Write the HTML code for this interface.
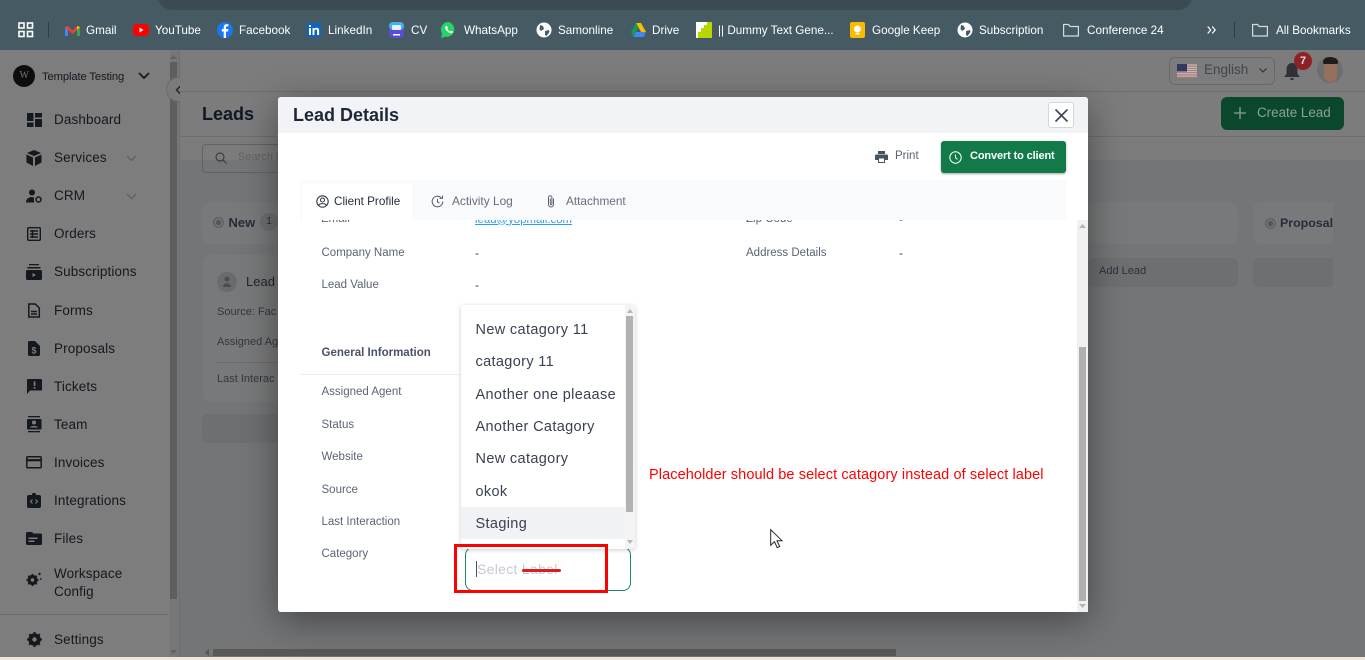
<!DOCTYPE html>
<html><head><meta charset="utf-8"><title>Leads</title>
<style>
html,body{margin:0;padding:0;width:1365px;height:660px;overflow:hidden;background:#767676;font-family:"Liberation Sans",sans-serif}
.a,.t{position:absolute}
.t{white-space:nowrap;line-height:1}
.bm{color:#fff;font-size:11.7px;top:24.5px}
.nav{color:#14181f;font-size:13.5px;left:54px;letter-spacing:.12px}
.lb{color:#5b6475;font-size:11.5px}
.opt{color:#3a4150;font-size:14.5px;left:475.5px;letter-spacing:.35px}
svg{position:absolute;overflow:visible}
</style></head><body>

<!-- chrome bookmarks bar -->
<div class="a" style="left:0;top:0;width:1365px;height:50px;background:#465a64"></div>
<div class="a" style="left:158px;top:-20px;width:1034px;height:30px;background:#3b4a53;border-radius:0 0 14px 14px"></div>
<svg style="left:18px;top:22px" width="16" height="16" fill="none" stroke="#fff" stroke-width="1.6"><rect x="1" y="1" width="5" height="5"/><rect x="9.5" y="1" width="5" height="5"/><rect x="1" y="9.5" width="5" height="5"/><rect x="9.5" y="9.5" width="5" height="5"/></svg>
<div class="a" style="left:48px;top:22px;width:1px;height:16px;background:#2f3d45"></div>

<svg style="left:65px;top:25px" width="15" height="12"><path d="M0 2v9h3V5z" fill="#4285f4"/><path d="M15 2v9h-3V5z" fill="#34a853"/><path d="M0 2l3-1 4.500 4.500L12 1l3 1-3 3-4.500 4L3 5z" fill="#ea4335"/><path d="M12 1l3 1-3 3z" fill="#fbbc04"/></svg>
<div class="t bm" style="left:86px">Gmail</div>
<svg style="left:133px;top:24px" width="16" height="12"><rect width="16" height="12" rx="3.500" fill="#f00"/><path d="M6.500 3.500v5l4-2.500z" fill="#fff"/></svg>
<div class="t bm" style="left:155px">YouTube</div>
<svg style="left:217px;top:22px" width="16" height="16"><circle cx="8" cy="8" r="8" fill="#1877f2"/><path d="M9 16V9.500h2l.4-2.500H9V5.600c0-.8.300-1.200 1.200-1.200h1.200V2.300C11 2.200 10.400 2.100 9.800 2.100 8 2.100 6.700 3.200 6.700 5.300V7H4.800v2.500h1.900V16z" fill="#fff"/></svg>
<div class="t bm" style="left:239px">Facebook</div>
<svg style="left:307px;top:23px" width="14" height="14"><rect width="14" height="14" fill="#0a66c2" rx="1"/><path d="M2 5h2v7H2zM2 2h2v2H2zM5.500 5h2v1c.5-.8 1.200-1.200 2.200-1.200 1.700 0 2.400 1.100 2.400 2.900V12h-2V8c0-1-.3-1.500-1.200-1.500S7.500 7.200 7.500 8.200V12h-2z" fill="#fff"/></svg>
<div class="t bm" style="left:328px">LinkedIn</div>
<svg style="left:389px;top:22px" width="15" height="16"><rect width="15" height="16" rx="4" fill="#5b4bd6"/><rect width="15" height="8" rx="4" fill="#3fb4e8"/><rect x="3" y="3" width="9" height="5" rx="1" fill="#e8f0f8"/><rect x="4" y="12" width="7" height="1.500" fill="#fff"/></svg>
<div class="t bm" style="left:411px">CV</div>
<svg style="left:441px;top:22px" width="15" height="16"><path d="M7.500 0a7.500 7.500 0 0 0-6.400 11.500L0 16l4-1.300A7.500 7.500 0 1 0 7.500 0z" fill="#25d366"/><path d="M4.800 4c-1 1-1 2.500.5 4.300S9 11.500 10.500 11.200c1-.2 1.400-1 1.400-1.600L10 8.700l-.8.900C8 9.200 6.700 7.800 6.200 6.600L7 5.900 6 4z" fill="#fff"/></svg>
<div class="t bm" style="left:464px">WhatsApp</div>
<svg style="left:536px;top:22px" width="16" height="16"><circle cx="8" cy="8" r="7.500" fill="#fff"/><path d="M4 3l3 1 1 3-3 2-1.500-2zM9 9l4-1 .5 2-3 4-1.500-1z" fill="#465a64"/></svg>
<div class="t bm" style="left:558px">Samonline</div>
<svg style="left:631px;top:23px" width="15" height="14"><path d="M5 0h5l5 9h-5z" fill="#fbbc04"/><path d="M5 0L0 9l2.500 4.500L7.500 4.500z" fill="#0f9d58"/><path d="M2.500 14l2.500-5h10l-2.500 5z" fill="#4285f4"/></svg>
<div class="t bm" style="left:652px">Drive</div>
<svg style="left:696px;top:22px" width="16" height="16"><rect width="16" height="16" fill="#b5d900"/><path d="M0 0h11v3H8v3H5v4H2v6H0z" fill="#fff"/></svg>
<div class="t bm" style="left:718px">|| Dummy Text Gene...</div>
<svg style="left:850px;top:22px" width="15" height="16"><rect width="15" height="16" rx="2" fill="#fbb900"/><circle cx="7.500" cy="7" r="3.500" fill="#fff"/><rect x="5.500" y="11" width="4" height="1.500" fill="#fff"/></svg>
<div class="t bm" style="left:872px">Google Keep</div>
<svg style="left:957px;top:22px" width="16" height="16"><circle cx="8" cy="8" r="7.500" fill="#fff"/><path d="M4 3l3 1 1 3-3 2-1.500-2zM9 9l4-1 .5 2-3 4-1.500-1z" fill="#465a64"/></svg>
<div class="t bm" style="left:979px">Subscription</div>
<svg style="left:1063px;top:23px" width="16" height="14" fill="none" stroke="#d5dadd" stroke-width="1.200"><path d="M.6 13V1.500h5l1.500 2h8.300V13z"/></svg>
<div class="t bm" style="left:1087px">Conference 24</div>
<svg style="left:1207px;top:26px" width="10" height="8" fill="none" stroke="#fff" stroke-width="1.200"><path d="M.7.500l3 3.500-3 3.500M5.200.500l3 3.500-3 3.500"/></svg>
<div class="a" style="left:1234px;top:22px;width:1px;height:16px;background:#2f3d45"></div>
<svg style="left:1252px;top:23px" width="16" height="14" fill="none" stroke="#d5dadd" stroke-width="1.200"><path d="M.6 13V1.500h5l1.500 2h8.300V13z"/></svg>
<div class="t bm" style="left:1276px">All Bookmarks</div>

<!-- dimmed app: sidebar -->
<div class="a" style="left:0;top:50px;width:170px;height:610px;background:#7d7d7d"></div>
<div class="a" style="left:170px;top:50px;width:9px;height:610px;background:#777"></div>
<div class="a" style="left:170px;top:62px;width:7px;height:537px;background:#5e5e5e"></div>
<svg style="left:170px;top:55px" width="7" height="4" fill="#626262"><path d="M3.500 0L7 4H0z"/></svg>
<svg style="left:170px;top:650px" width="7" height="4" fill="#626262"><path d="M0 0h7L3.500 4z"/></svg>
<div class="a" style="left:179px;top:50px;width:1px;height:610px;background:#6e6e6e"></div>
<div class="a" style="left:13px;top:65px;width:22px;height:22px;border-radius:50%;background:#0d0d0d"></div>
<div class="t" style="left:19.5px;top:71px;color:#777;font-size:10px;font-family:'Liberation Serif',serif">W</div>
<div class="t" style="left:42px;top:71.500px;color:#14181f;font-size:11.2px;letter-spacing:-.1px">Template Testing</div>
<svg style="left:138px;top:72px" width="12" height="8" fill="none" stroke="#14181f" stroke-width="1.800"><path d="M1 1l5 5 5-5"/></svg>
<div class="a" style="left:166px;top:77px;width:25px;height:25px;border-radius:50%;background:#7b7b7b;border:1px solid #6b6b6b;box-sizing:border-box"></div>
<svg style="left:175px;top:85px" width="7" height="10" fill="none" stroke="#22262c" stroke-width="1.500"><path d="M5.500 1L1.500 5l4 4"/></svg>

<svg style="left:27px;top:113px" width="15" height="14" fill="#14181f"><rect width="6.500" height="8"/><rect x="8" width="7" height="4.500"/><rect y="9.500" width="6.500" height="4.500"/><rect x="8" y="6" width="7" height="8"/></svg>
<div class="t nav" style="top:113px">Dashboard</div>
<svg style="left:26px;top:150px" width="16" height="16" fill="#14181f"><path d="M8 0l7 3-7 3-7-3zM.5 4.500L7 7.500V16L.5 12.500zM15.500 4.500V12.500L9 16V7.500z"/></svg>
<div class="t nav" style="top:151px">Services</div>
<svg style="left:126px;top:155px" width="11" height="7" fill="none" stroke="#5e6268" stroke-width="1.400"><path d="M1 1l4.500 4.500L10 1"/></svg>
<svg style="left:26px;top:189px" width="16" height="14" fill="#14181f"><circle cx="6" cy="3.500" r="3"/><path d="M0 13.500c0-3.500 2.500-5.500 6-5.500l2 .5v5z"/><circle cx="12.500" cy="10.500" r="2.500" fill="none" stroke="#14181f" stroke-width="1.500"/></svg>
<div class="t nav" style="top:189px">CRM</div>
<svg style="left:126px;top:193px" width="11" height="7" fill="none" stroke="#5e6268" stroke-width="1.400"><path d="M1 1l4.500 4.500L10 1"/></svg>
<svg style="left:27px;top:227px" width="14" height="14" fill="none" stroke="#14181f" stroke-width="1.400"><rect x=".7" y=".7" width="12.600" height="12.600" rx="1"/><path d="M3 4h8M3 7h8M3 10h8M5.500 3v8"/></svg>
<div class="t nav" style="top:227px">Orders</div>
<svg style="left:26px;top:264px" width="16" height="16" fill="#14181f"><rect x="3" width="10" height="1.300"/><rect x="1.500" y="3" width="13" height="1.500"/><rect y="6" width="16" height="10" rx="1.500"/><path d="M6.500 9v4l3.500-2z" fill="#7d7d7d"/></svg>
<div class="t nav" style="top:265px">Subscriptions</div>
<svg style="left:28px;top:303px" width="12" height="15" fill="none" stroke="#14181f" stroke-width="1.500"><path d="M.8 1h6.500l4 4v9H.8zM3 8.500h6M3 11h6"/></svg>
<div class="t nav" style="top:304px">Forms</div>
<svg style="left:28px;top:341px" width="12" height="15" fill="#14181f"><path d="M0 1.500Q0 0 1.500 0H7l5 5v8.500Q12 15 10.500 15h-9Q0 15 0 13.500z"/><text x="3.500" y="12.500" font-size="9" font-weight="700" fill="#7d7d7d" font-family="Liberation Sans">$</text></svg>
<div class="t nav" style="top:342px">Proposals</div>
<svg style="left:27px;top:379px" width="15" height="15" fill="#14181f"><path d="M1 0h13a1 1 0 0 1 1 1v9.500a1 1 0 0 1-1 1H3L0 15V1a1 1 0 0 1 1-1z"/><rect x="6.700" y="2.500" width="1.700" height="4.500" fill="#7d7d7d"/><rect x="6.700" y="8" width="1.700" height="1.700" fill="#7d7d7d"/></svg>
<div class="t nav" style="top:380px">Tickets</div>
<svg style="left:27px;top:416px" width="14" height="17" fill="#14181f"><rect x="1" width="12" height="1.300"/><rect y="3" width="14.500" height="10.500" rx="1"/><rect x="1" y="15" width="12" height="1.300"/><circle cx="7" cy="6.500" r="2" fill="#7d7d7d"/><path d="M3 11.500c0-2 8-2 8 0z" fill="#7d7d7d"/></svg>
<div class="t nav" style="top:418px">Team</div>
<svg style="left:26px;top:456px" width="16" height="13" fill="none" stroke="#14181f" stroke-width="1.500"><rect x=".8" y=".8" width="14.400" height="11" rx="1"/><path d="M1 4.200h14" stroke-width="2.200"/></svg>
<div class="t nav" style="top:456px">Invoices</div>
<svg style="left:27px;top:493px" width="14" height="15" fill="#14181f"><rect y="2" width="14" height="13" rx="2"/><rect x="5" width="4" height="3" rx="1.500"/><path d="M5.500 6.500l-2 2 2 2M8.500 6.500l2 2-2 2" fill="none" stroke="#7d7d7d" stroke-width="1.100"/></svg>
<div class="t nav" style="top:494px">Integrations</div>
<svg style="left:26px;top:532px" width="16" height="13" fill="#14181f"><path d="M0 1.500Q0 0 1.500 0H6l1.500 1.500h7Q16 1.500 16 3v8.500q0 1.500-1.500 1.500h-13Q0 13 0 11.500z"/><rect x="2.500" y="5.500" width="9" height="1.500" fill="#7d7d7d"/><rect x="2.500" y="8.500" width="6" height="1.500" fill="#7d7d7d"/></svg>
<div class="t nav" style="top:532px">Files</div>
<svg style="left:26px;top:571px" width="16" height="16"><circle cx="6.500" cy="9" r="3.600" fill="none" stroke="#14181f" stroke-width="3"/><path d="M6.500 3v12M.5 9h12M2.300 4.800l8.400 8.400M10.700 4.800l-8.400 8.400" stroke="#14181f" stroke-width="1.800"/><circle cx="6.500" cy="9" r="1.800" fill="#7d7d7d"/><circle cx="13.500" cy="3" r="1.200" fill="#14181f"/><circle cx="14.800" cy="8" r=".9" fill="#14181f"/></svg>
<div class="t nav" style="top:567px">Workspace</div>
<div class="t nav" style="top:585px">Config</div>
<div class="a" style="left:0;top:614px;width:168px;height:1px;background:#6c6c6c"></div>
<svg style="left:27px;top:632px" width="15" height="15"><circle cx="7.500" cy="7.500" r="4.500" fill="none" stroke="#14181f" stroke-width="3.500"/><path d="M7.500 0v15M0 7.500h15M2.200 2.200l10.600 10.600M12.800 2.200L2.200 12.800" stroke="#14181f" stroke-width="2"/><circle cx="7.500" cy="7.500" r="2.200" fill="#7d7d7d"/></svg>
<div class="t nav" style="top:633px">Settings</div>

<!-- dimmed main -->
<div class="a" style="left:180px;top:50px;width:1185px;height:110px;background:#7c7c7c"></div>
<div class="a" style="left:180px;top:160px;width:1185px;height:500px;background:#747577"></div>
<div class="a" style="left:180px;top:91px;width:1185px;height:1px;background:#6c6c6c"></div>
<div class="a" style="left:180px;top:136px;width:1185px;height:1px;background:#6f6f6f"></div>
<div class="a" style="left:1169px;top:57px;width:106px;height:28px;border:1px solid #6a6a6a;border-radius:6px;box-sizing:border-box"></div>
<svg style="left:1177px;top:64px" width="20" height="14"><rect width="20" height="14" fill="#a87a7a"/><path d="M0 1h20M0 3.200h20M0 5.400h20M0 7.600h20M0 9.800h20M0 12h20" stroke="#c9c3c3" stroke-width="1"/><rect width="10" height="7.500" fill="#33385c"/></svg>
<div class="t" style="left:1204px;top:63px;font-size:13.5px;color:#3e4650">English</div>
<svg style="left:1259px;top:68px" width="8" height="5" fill="none" stroke="#2c3138" stroke-width="1.100"><path d="M.5.500L4 4 7.500.500"/></svg>
<svg style="left:1284px;top:63px" width="16" height="18" fill="#2f3338"><path d="M8 0c3.500 0 5.500 3 5.500 6.500V11L16 14H0l2.500-3V6.500C2.500 3 4.500 0 8 0z"/><rect x="6.500" y="15" width="3" height="2"/></svg>
<div class="a" style="left:1294px;top:52px;width:18px;height:18px;border-radius:50%;background:#8d2226;color:#ddd;font-size:11px;font-weight:700;text-align:center;line-height:18px">7</div>
<div class="a" style="left:1317px;top:57px;width:26px;height:26px;border-radius:50%;background:#6e6e6e;overflow:hidden"><div class="a" style="left:7px;top:4px;width:13px;height:21px;border-radius:5px 5px 7px 7px;background:#94705c"></div><div class="a" style="left:6px;top:0;width:15px;height:7px;border-radius:7px 7px 2px 2px;background:#221c18"></div></div>

<div class="t" style="left:202px;top:105px;font-size:18px;font-weight:700;color:#101827">Leads</div>
<div class="a" style="left:1221px;top:97px;width:123px;height:33px;border-radius:6px;background:#0b472c"></div>
<svg style="left:1234px;top:107px" width="12" height="12" stroke="#8aa295" stroke-width="1.300"><path d="M6 0v12M0 6h12"/></svg>
<div class="t" style="left:1257px;top:106px;font-size:13.4px;color:#8aa295">Create Lead</div>
<div class="a" style="left:202px;top:144px;width:90px;height:29px;border:1px solid #636363;border-radius:4px;box-sizing:border-box"></div>
<svg style="left:215px;top:152px" width="12" height="12" fill="none" stroke="#3a3d42" stroke-width="1.200"><circle cx="5" cy="5" r="4"/><path d="M8 8l3.500 3.500"/></svg>
<div class="t" style="left:238px;top:152px;font-size:11px;color:#5f6368">Search l</div>
<div class="a" style="left:202px;top:202px;width:90px;height:42px;border-radius:8px;background:#78797a"></div>
<svg style="left:213px;top:217px" width="11" height="11"><circle cx="5.500" cy="5.500" r="4.800" fill="none" stroke="#53575c"/><circle cx="5.500" cy="5.500" r="2.800" fill="#53575c"/></svg>
<div class="t" style="left:228.5px;top:216px;font-size:13px;font-weight:700;color:#252c3a">New</div>
<div class="a" style="left:260px;top:213px;width:18px;height:18px;border-radius:50%;background:#6d6e70;color:#2a303a;font-size:10px;text-align:center;line-height:18px">1</div>
<div class="a" style="left:203px;top:255px;width:90px;height:147px;border-radius:8px;background:#78797a"></div>
<div class="a" style="left:217px;top:272px;width:20px;height:20px;border-radius:50%;background:#6a6b6d"></div>
<svg style="left:222px;top:276px" width="10" height="11" fill="#4a4d52"><circle cx="5" cy="3" r="2.500"/><path d="M1 11c0-5 8-5 8 0z"/></svg>
<div class="t" style="left:246px;top:275px;font-size:13px;color:#202632">Lead</div>
<div class="t" style="left:217px;top:306.5px;font-size:11px;color:#33373e">Source: Fac</div>
<div class="t" style="left:217px;top:336.5px;font-size:11px;color:#33373e">Assigned Ag</div>
<div class="a" style="left:217px;top:362px;width:70px;height:1px;background:#6a6a6b"></div>
<div class="t" style="left:217px;top:373.5px;font-size:11px;color:#33373e">Last Interac</div>
<div class="a" style="left:202px;top:414px;width:90px;height:29px;border-radius:6px;background:#6e6f71"></div>
<div class="a" style="left:1088px;top:202px;width:150px;height:42px;border-radius:8px;background:#78797a"></div>
<div class="a" style="left:1088px;top:258px;width:150px;height:29px;border-radius:6px;background:#6e6f71"></div>
<div class="t" style="left:1099px;top:266px;font-size:11px;color:#2a3140">Add Lead</div>
<div class="a" style="left:1253px;top:202px;width:80px;height:42px;border-radius:8px 0 0 8px;background:#78797a"></div>
<svg style="left:1265px;top:218px" width="11" height="11"><circle cx="5.500" cy="5.500" r="4.800" fill="none" stroke="#53575c"/><circle cx="5.500" cy="5.500" r="2.800" fill="#53575c"/></svg>
<div class="a" style="left:1280px;top:216.5px;width:53px;height:14px;overflow:hidden;white-space:nowrap;line-height:1;font-size:12.4px;font-weight:700;color:#252c3a">Proposal</div>
<div class="a" style="left:1253px;top:258px;width:80px;height:29px;border-radius:6px 0 0 6px;background:#6e6f71"></div>
<div class="a" style="left:213px;top:649px;width:683px;height:7px;background:#585858"></div>
<svg style="left:205px;top:649px" width="4" height="7" fill="#565656"><path d="M4 0v7L0 3.500z"/></svg>
<div class="a" style="left:0;top:657px;width:1365px;height:3px;background:#ece6dd"></div>

<!-- modal -->
<div class="a" style="left:278px;top:97px;width:810px;height:515px;background:#fff;border-radius:3px;box-shadow:0 8px 36px rgba(0,0,0,.42)"></div>
<div class="a" style="left:278px;top:97px;width:810px;height:36px;background:#f2f3f7;border-radius:3px 3px 0 0"></div>
<div class="t" style="left:293px;top:105.5px;font-size:18px;font-weight:700;color:#1e2739">Lead Details</div>
<div class="a" style="left:1048px;top:102px;width:26px;height:26px;background:#fff;border:1px solid #d3d6dc;border-radius:3px;box-sizing:border-box"></div>
<svg style="left:1055px;top:108.5px" width="13" height="13" fill="none" stroke="#3d4656" stroke-width="1.600"><path d="M.5.500l12 12M12.500.500l-12 12"/></svg>
<svg style="left:875px;top:151px" width="13" height="12" fill="#4a5363"><rect x="3" width="7" height="3"/><path d="M1 3.500h11a1 1 0 0 1 1 1V9h-3v3H3V9H0V4.500a1 1 0 0 1 1-1z"/><rect x="4" y="7.500" width="5" height="3.500" fill="#fff"/></svg>
<div class="t" style="left:895px;top:151px;font-size:11.5px;color:#5b6475">Print</div>
<div class="a" style="left:941px;top:141px;width:125px;height:32px;border-radius:3px;background:#127a48;box-shadow:0 1px 2px rgba(0,0,0,.35)"></div>
<svg style="left:949px;top:151px" width="13" height="13" fill="none" stroke="#fff" stroke-width="1"><circle cx="6.500" cy="6.500" r="5.700"/><path d="M6.500 3.500v3.300l2 1.500"/></svg>
<div class="t" style="left:970px;top:151px;font-size:11px;font-weight:700;color:#fff;letter-spacing:-.13px">Convert to client</div>

<div class="a" style="left:300px;top:180px;width:766px;height:40px;background:#f9fafc"></div>
<div class="a" style="left:302px;top:184px;width:110px;height:36px;background:#fff"></div>
<svg style="left:316px;top:195px" width="13" height="13" fill="none" stroke="#333b49" stroke-width="1.100"><circle cx="6.500" cy="6.500" r="5.700"/><circle cx="6.500" cy="5" r="2"/><path d="M2.500 10.500c1-2.500 7-2.500 8 0"/></svg>
<div class="t" style="left:334px;top:196px;font-size:11.7px;color:#262d3b">Client Profile</div>
<svg style="left:431px;top:195px" width="13" height="13" fill="none" stroke="#5b6475" stroke-width="1.100"><path d="M11.800 6.500a5.300 5.300 0 1 1-1.700-3.900M11.500 .5v2.800H8.700M6.500 4v3l2 1"/></svg>
<div class="t" style="left:452px;top:196px;font-size:11.9px;color:#656d7c">Activity Log</div>
<svg style="left:547px;top:195px" width="8" height="13" fill="none" stroke="#5b6475" stroke-width="1"><path d="M6.500 3.500v6a2.500 2.500 0 0 1-5 0v-7a1.700 1.700 0 0 1 3.400 0v6.500a.8.800 0 0 1-1.600 0V3.500"/></svg>
<div class="t" style="left:566px;top:196px;font-size:11.8px;color:#656d7c">Attachment</div>

<!-- scroll content, clipped -->
<div class="a" style="left:300px;top:220px;width:777px;height:10px;overflow:hidden">
 <div class="t lb" style="left:21px;top:-6px">Email</div>
 <div class="t" style="left:175px;top:-5.500px;font-size:11.4px;color:#2d9cf0;text-decoration:underline">lead@yopmail.com</div>
 <div class="t lb" style="left:446px;top:-6px">Zip Code</div>
 <div class="t lb" style="left:599px;top:-5px;color:#333">-</div>
</div>
<div class="t lb" style="left:321.5px;top:247.5px">Company Name</div>
<div class="t lb" style="left:475px;top:249px;color:#333">-</div>
<div class="t lb" style="left:746px;top:247.5px">Address Details</div>
<div class="t lb" style="left:899px;top:249px;color:#333">-</div>
<div class="t lb" style="left:321.5px;top:279.5px">Lead Value</div>
<div class="t lb" style="left:475px;top:281px;color:#333">-</div>
<div class="t lb" style="left:321.5px;top:347.5px;font-weight:700;color:#4a5363">General Information</div>
<div class="a" style="left:300px;top:374px;width:162px;height:1px;background:#eceef0"></div>
<div class="t lb" style="left:321.5px;top:386.5px">Assigned Agent</div>
<div class="t lb" style="left:321.5px;top:419.5px">Status</div>
<div class="t lb" style="left:321.5px;top:451.5px">Website</div>
<div class="t lb" style="left:321.5px;top:484.5px">Source</div>
<div class="t lb" style="left:321.5px;top:516.5px">Last Interaction</div>
<div class="t lb" style="left:321.5px;top:548.5px">Category</div>

<!-- select input -->
<div class="a" style="left:465px;top:547px;width:166px;height:44px;border:1px solid #1a8a57;border-radius:8px;box-sizing:border-box;background:#fff"></div>
<div class="a" style="left:476px;top:561px;width:1px;height:16px;background:#4a5363"></div>
<div class="t" style="left:477px;top:562px;font-size:14px;color:#c6c9d3;letter-spacing:.3px">Select Label</div>

<!-- dropdown -->
<div class="a" style="left:461px;top:305px;width:174px;height:244px;background:#fff;border-radius:3px;box-shadow:0 1px 5px rgba(0,0,0,.2)"></div>
<div class="a" style="left:461px;top:507px;width:164px;height:32px;background:#f1f2f5"></div>
<div class="a" style="left:625px;top:305px;width:10px;height:244px;background:#f4f4f4;border-radius:0 3px 3px 0"></div>
<div class="a" style="left:626px;top:316px;width:7px;height:196px;background:#b2b2b2"></div>
<svg style="left:626.500px;top:309px" width="6" height="4" fill="#b5b5b5"><path d="M3 0l3 4H0z"/></svg>
<svg style="left:626.500px;top:540px" width="6" height="4" fill="#b5b5b5"><path d="M0 0h6L3 4z"/></svg>
<div class="t opt" style="top:323px">New catagory 11</div>
<div class="t opt" style="top:355px">catagory 11</div>
<div class="t opt" style="top:388px">Another one pleaase</div>
<div class="t opt" style="top:420px">Another Catagory</div>
<div class="t opt" style="top:452px">New catagory</div>
<div class="t opt" style="top:485px">okok</div>
<div class="t opt" style="top:517px">Staging</div>

<!-- annotation -->
<div class="a" style="left:454px;top:544px;width:154px;height:49px;border:3px solid #f00;box-sizing:border-box"></div>
<div class="a" style="left:522px;top:569px;width:39px;height:3px;background:#d92020;border-radius:2px"></div>
<div class="t" style="left:649px;top:467.500px;font-size:14.5px;color:#f00;letter-spacing:.1px">Placeholder should be select catagory instead of select label</div>
<svg style="left:770px;top:529px" width="13" height="20"><path d="M.7.700v15.500l3.800-3.500 2.700 6 2.500-1.200-2.700-5.800h5z" fill="#fff" stroke="#23262c" stroke-width="1"/></svg>

<!-- modal scrollbar -->
<div class="a" style="left:1077px;top:220px;width:11px;height:392px;background:#f1f1f1"></div>
<div class="a" style="left:1079px;top:347px;width:7px;height:254px;background:#b0b0b0"></div>
<svg style="left:1079px;top:224px" width="7" height="5" fill="#b5b5b5"><path d="M3.500 0L7 4H0z"/></svg>
<svg style="left:1079px;top:604px" width="7" height="5" fill="#b5b5b5"><path d="M0 0h7L3.500 4z"/></svg>
</body></html>
